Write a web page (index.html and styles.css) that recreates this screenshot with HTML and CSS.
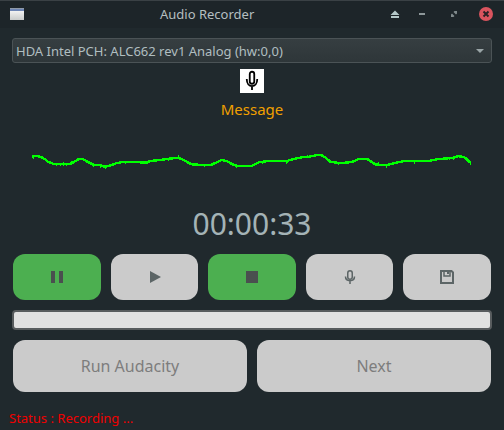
FILE: index.html
```html
<!DOCTYPE html>
<html lang="en">
<head>
    <meta charset="UTF-8">
    <title>Audio Recorder</title>
    <link rel="stylesheet" href="styles.css">
</head>
<body>
<div class="window">
    <header class="titlebar">
        <span class="app-icon"></span>
        <span class="title">Audio Recorder</span>
        <div class="win-buttons">
            <svg class="win-btn eject" width="14" height="14" viewBox="0 0 14 14"><path d="M7 3.500 L11.500 8 H2.500 Z M3 9 H11 V11 H3 Z" fill="#b4c8c8"/></svg>
            <svg class="win-btn" width="14" height="14" viewBox="0 0 14 14"><rect x="4" y="6" width="6" height="2" fill="#8d9799"/></svg>
            <svg class="win-btn" width="14" height="14" viewBox="0 0 14 14"><path d="M7.500 4 H10 V6.500 L9 7.500 L6.500 5 Z M4 10 V7.500 L5 6.500 L7.500 9 L6.500 10 Z" fill="#7f898b"/></svg>
            <span class="close-btn">
                <svg width="14" height="14" viewBox="0 0 14 14"><path d="M4.500 4.500 L9.500 9.500 M9.500 4.500 L4.500 9.500" stroke="#2a2226" stroke-width="2"/></svg>
            </span>
        </div>
    </header>

    <main class="content">
        <div class="device-select">
            <span>HDA Intel PCH: ALC662 rev1 Analog (hw:0,0)</span>
            <i class="arrow"></i>
        </div>

        <div class="mic-box">
            <svg width="24" height="24" viewBox="0 0 24 24">
                <rect x="9.750" y="2.750" width="4.500" height="12" rx="2.250" fill="none" stroke="#000" stroke-width="1.800"/>
                <path d="M6.750 10 C6.750 19.500 17.250 19.500 17.250 10 M12 17 V21" fill="none" stroke="#000" stroke-width="1.800"/>
            </svg>
        </div>
        <div class="message">Message</div>

        <svg class="wave" width="504" height="60" viewBox="0 0 504 60">
            <polyline fill="none" stroke="#00ff00" stroke-width="2.400" stroke-linejoin="bevel" shape-rendering="crispEdges" points="32.300,26.700 36.700,25.700 41.700,27.300 45,29.300 48.300,32 53.300,33.700 58.300,34.300 63.300,33.700 68.300,34.300 73.300,32.300 78.300,29.300 82.700,29 87.300,31.700 93.300,34.700 99,35 105,36.700 111.700,35 116.700,33 123.300,32 140,32.300 146.700,32.700 150,31 160,30 166.700,29 178.300,27.700 183.300,30 191.700,34.300 203.300,35 210,35.300 216.700,32.300 221.700,30 226.700,31 231.700,34 236.700,35.700 252,35.700 258.700,32.300 268.700,31 287,31 293.700,29 302,27.300 308.700,27 312,26 320.300,24.700 325.300,27.300 330.300,31.700 338.700,33 345.300,32.700 352,32 358.700,29 367,29 375.300,34.300 385.300,35.300 395.300,33 403.700,31 430.300,30.700 438.700,29 452,28 459,26 465.300,27.700 470.300,32.700"/>
            <path fill="none" stroke="#00ff00" stroke-width="1" shape-rendering="crispEdges" d="M33.500 27v2 M39.500 26v2 M56.500 33v3 M60.500 33v3 M63.500 32v4 M66.500 33v3 M71.500 31v4 M93.500 33v4 M100.500 34v4 M105.500 35v4 M125.500 31v3 M143.500 31v3 M149.500 30v3 M168.500 28v3 M178.500 25v3 M204.500 34v3 M212.500 33v3 M236.500 34v4 M287.500 30v3 M286.500 30v4 M262.500 31v3 M307.500 25v3 M322.500 24v3 M338.500 32v3 M346.500 31v3 M368.500 28v3 M378.500 32v4 M386.500 34v4 M414.500 30v4 M436.500 28v3 M449.500 27v3 M453.500 27v3 M459.500 25v3 M470.500 32v3"/>
        </svg>

        <div class="timer">00:00:33</div>

        <div class="controls">
            <button class="btn btn-on">
                <svg width="14" height="14" viewBox="0 0 14 14"><path d="M1 1 H5 V13 H1 Z M9 1 H13 V13 H9 Z" fill="#4a4f4f"/></svg>
            </button>
            <button class="btn">
                <svg width="14" height="14" viewBox="0 0 14 14"><path d="M2 1 L13 7 L2 13 Z" fill="#5c6566"/></svg>
            </button>
            <button class="btn btn-on">
                <svg width="14" height="14" viewBox="0 0 14 14"><rect x="1" y="1" width="12" height="12" fill="#4a4f4f"/></svg>
            </button>
            <button class="btn">
                <svg width="14" height="14" viewBox="0 0 14 14">
                    <rect x="4.750" y="0.750" width="4.500" height="8.500" rx="2.250" fill="none" stroke="#5c6566" stroke-width="1.500"/>
                    <path d="M2.500 6.500 C2.500 12 11.500 12 11.500 6.500 M7 10.500 V14" fill="none" stroke="#5c6566" stroke-width="1.500"/>
                </svg>
            </button>
            <button class="btn">
                <svg width="16" height="16" viewBox="0 0 16 16">
                    <path d="M2 2 H12.500 L14 3.500 V14 H2 Z" fill="none" stroke="#5c6566" stroke-width="2"/>
                    <path d="M5 2 V7 H11 V2" fill="none" stroke="#5c6566" stroke-width="1.500"/>
                    <rect x="8" y="2" width="2" height="3" fill="#5c6566"/>
                </svg>
            </button>
        </div>

        <div class="progress"></div>

        <div class="actions">
            <button class="btn btn-big">Run Audacity</button>
            <button class="btn btn-big">Next</button>
        </div>
    </main>

    <footer class="status">Status : Recording ...</footer>
</div>
</body>
</html>
```

FILE: styles.css
```css
* {
    box-sizing: border-box;
}

html, body {
    margin: 0;
    height: 100%;
}

body {
    background-color: #20292d;
    font-family: "Noto Sans", sans-serif;
    overflow: hidden;
}

.window {
    width: 504px;
    height: 430px;
    display: flex;
    flex-direction: column;
}

.titlebar {
    height: 28px;
    flex: none;
    display: flex;
    align-items: center;
    padding: 0 11px 1px 10px;
    background-color: #1d2529;
    border-top: 1px solid #3a4145;
    color: #b5bfc0;
    font-size: 13px;
}

.app-icon {
    width: 14px;
    height: 12px;
    background: linear-gradient(#8f9aa8 0 1px, #6d85b5 1px 3px, #f2f2f2 3px, #c9cbcb);
}

.title {
    margin-left: 136px;
    line-height: 16px;
}

.win-buttons {
    margin-left: auto;
    display: flex;
    align-items: center;
    gap: 18px;
}

.win-btn {
    display: block;
}

.eject {
    margin-right: -5px;
}

.close-btn {
    width: 14px;
    height: 14px;
    border-radius: 50%;
    background-color: #d9545e;
    display: block;
}

.close-btn svg {
    display: block;
}

.content {
    flex: 1;
    padding: 10px 12px 0;
    display: flex;
    flex-direction: column;
}

.device-select {
    height: 25px;
    padding: 0 3px;
    display: flex;
    align-items: center;
    justify-content: space-between;
    background: linear-gradient(#363e41, #2e3639);
    border: 1px solid #4b5356;
    border-radius: 3px;
    color: #b0bec0;
    font-size: 13px;
}

.arrow {
    width: 0;
    height: 0;
    margin-right: 4px;
    border-left: 4px solid transparent;
    border-right: 4px solid transparent;
    border-top: 4px solid #9aa5a7;
}

.mic-box {
    width: 24px;
    height: 24px;
    margin: 6px auto 0;
    background-color: #fff;
}

.mic-box svg {
    display: block;
}

.message {
    margin-top: 6px;
    text-align: center;
    font-size: 15px;
    line-height: 20px;
    color: #f0a000;
}

.wave {
    display: block;
    margin: 11px -12px 0;
    flex: none;
}

.timer {
    margin-top: 15px;
    text-align: center;
    font-size: 30px;
    line-height: 38px;
    color: #a4b3b6;
}

.controls {
    margin: 11px 0 0 1px;
    display: grid;
    grid-template-columns: 88px 87px 88px 87px 88px;
    gap: 10px;
}

.btn {
    height: 46px;
    border: 0;
    padding: 0;
    border-radius: 12px;
    background-color: #cbcbcb;
    display: flex;
    align-items: center;
    justify-content: center;
    font-family: inherit;
}

.btn-on {
    background-color: #4caf50;
}

.progress {
    height: 20px;
    margin-top: 10px;
    background-color: #e1e1e1;
    border: 2px solid #585c5e;
    border-radius: 4px;
}

.actions {
    margin: 10px 0 0 1px;
    display: grid;
    grid-template-columns: 234px 234px;
    gap: 10px;
}

.btn-big {
    height: 52px;
    font-size: 16px;
    color: #7d7d7d;
}

.status {
    flex: none;
    padding: 0 0 3px 9px;
    font-size: 13px;
    line-height: 17px;
    color: #f00000;
}
```
